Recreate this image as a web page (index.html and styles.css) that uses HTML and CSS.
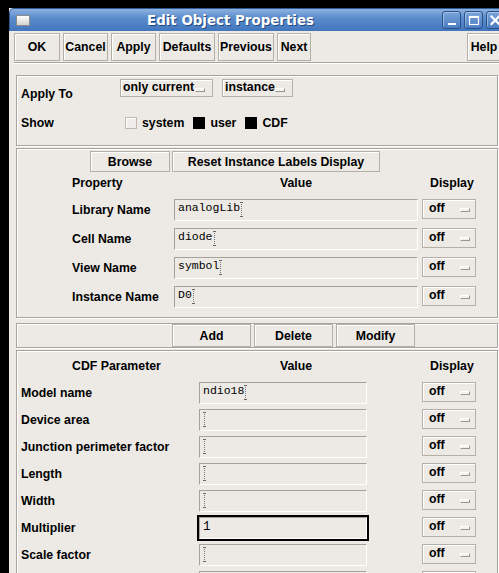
FILE: index.html
```html
<!DOCTYPE html>
<html>
<head>
<meta charset="utf-8">
<title>Edit Object Properties</title>
<link rel="stylesheet" href="styles.css">
</head>
<body>
<div class="window">
  <div class="titlebar">
    <span class="appicon"></span>
    <span class="title">Edit Object Properties</span>
    <span class="wbtn"><svg width="17" height="15" viewBox="0 0 17 15"><rect x="5" y="10" width="8" height="2" fill="#fff"/></svg></span>
    <span class="wbtn"><svg width="17" height="15" viewBox="0 0 17 15"><rect x="4.5" y="3.5" width="9" height="8" fill="none" stroke="#fff" stroke-width="1.2"/><rect x="4" y="3" width="10" height="2" fill="#fff"/></svg></span>
    <span class="wbtn"><svg width="17" height="15" viewBox="0 0 17 15"><path d="M4.5 3.5 L12 11 M12 3.5 L4.5 11" stroke="#fff" stroke-width="2.2" stroke-linecap="square"/></svg></span>
  </div>

  <div class="toolbar">
    <button class="btn tb w-ok">OK</button>
    <button class="btn tb w-cancel">Cancel</button>
    <button class="btn tb w-apply">Apply</button>
    <button class="btn tb w-def">Defaults</button>
    <button class="btn tb w-prev">Previous</button>
    <button class="btn tb w-next">Next</button>
    <button class="btn tb w-help">Help</button>
  </div>
  <div class="sep"></div>

  <div class="content">
    <section class="frame f-apply">
      <div class="arow">
        <span class="alabel">Apply To</span>
        <span class="combo c-cur">only current<i class="ind"></i></span>
        <span class="combo c-inst">instance<i class="ind"></i></span>
      </div>
      <div class="srow">
        <span class="slabel">Show</span>
        <span class="chk"></span><span class="ctext">system</span>
        <span class="chk on"></span><span class="ctext">user</span>
        <span class="chk on"></span><span class="ctext">CDF</span>
      </div>
    </section>

    <section class="frame f-prop">
      <div class="brow">
        <button class="btn b-browse">Browse</button>
        <button class="btn b-reset">Reset Instance Labels Display</button>
      </div>
      <div class="hdr">
        <span class="h1">Property</span>
        <span class="h2">Value</span>
        <span class="h3">Display</span>
      </div>
      <div class="pgrid">
        <span class="plabel">Library Name</span>
        <span class="field">analogLib<i class="cur"></i></span>
        <span class="off">off<i class="ind"></i></span>

        <span class="plabel">Cell Name</span>
        <span class="field">diode<i class="cur"></i></span>
        <span class="off">off<i class="ind"></i></span>

        <span class="plabel">View Name</span>
        <span class="field">symbol<i class="cur"></i></span>
        <span class="off">off<i class="ind"></i></span>

        <span class="plabel">Instance Name</span>
        <span class="field">D0<i class="cur"></i></span>
        <span class="off">off<i class="ind"></i></span>
      </div>
    </section>

    <section class="frame f-act">
      <button class="btn b-act">Add</button>
      <button class="btn b-act">Delete</button>
      <button class="btn b-act">Modify</button>
    </section>

    <section class="frame f-cdf">
      <div class="hdr">
        <span class="h1">CDF Parameter</span>
        <span class="h2">Value</span>
        <span class="h3">Display</span>
      </div>
      <div class="cgrid">
        <span class="clabel">Model name</span>
        <span class="field">ndio18<i class="cur"></i></span>
        <span class="off">off<i class="ind"></i></span>

        <span class="clabel">Device area</span>
        <span class="field"><i class="cur"></i></span>
        <span class="off">off<i class="ind"></i></span>

        <span class="clabel">Junction perimeter factor</span>
        <span class="field"><i class="cur"></i></span>
        <span class="off">off<i class="ind"></i></span>

        <span class="clabel">Length</span>
        <span class="field"><i class="cur"></i></span>
        <span class="off">off<i class="ind"></i></span>

        <span class="clabel">Width</span>
        <span class="field"><i class="cur"></i></span>
        <span class="off">off<i class="ind"></i></span>

        <span class="clabel">Multiplier</span>
        <span class="field focus">1</span>
        <span class="off">off<i class="ind"></i></span>

        <span class="clabel">Scale factor</span>
        <span class="field"><i class="cur"></i></span>
        <span class="off">off<i class="ind"></i></span>

        <span class="clabel"></span>
        <span class="field"></span>
        <span class="off"></span>
      </div>
    </section>
  </div>
</div>
</body>
</html>
```

FILE: styles.css
```css
* { box-sizing: border-box; }
html, body {
  margin: 0;
  width: 499px;
  height: 573px;
  overflow: hidden;
  background: #000;
}
body {
  font-family: "Liberation Sans", Arial, sans-serif;
  font-weight: bold;
  font-size: 12.3px;
  color: #000;
}
.window {
  margin: 8px 0 0 9px;
  width: 497px;
  height: 600px;
  background: #edeae5;
}

/* title bar */
.titlebar {
  height: 23px;
  display: flex;
  align-items: center;
  padding: 0 0 0 6px;
  background: linear-gradient(#8db2e0 0, #5b8ccc 40%, #4276bd 100%);
  border: 1px solid #2f5a96;
  border-bottom: none;
  border-radius: 5px 5px 0 0;
}
.appicon {
  width: 14px;
  height: 11px;
  background: linear-gradient(#ffffff, #d4d2cf);
  border: 1px solid #8b8b8b;
}
.title {
  flex: 1;
  text-align: center;
  color: #fff;
  font-family: "DejaVu Sans", sans-serif;
  font-size: 13.4px;
  font-weight: bold;
  text-shadow: 1px 1px 0 #24487c;
  padding-right: 8px;
}
.wbtn {
  width: 19px;
  height: 18px;
  margin-left: 3px;
  display: flex;
  align-items: center;
  justify-content: center;
  border: 1px solid #2a5089;
  border-radius: 3px;
  background: linear-gradient(#7aa4da, #4a7dc1);
  box-shadow: inset 1px 1px 0 rgba(255,255,255,0.35);
}

/* buttons */
.btn {
  font: inherit;
  color: #000;
  padding: 0;
  background: #edeae5;
  border: 1px solid #b4b0a8;
  box-shadow: inset 1px 1px 0 #fff;
  border-radius: 0;
}
.toolbar {
  height: 31px;
  display: flex;
  gap: 3px;
  padding: 2px 5px 0 5px;
}
.tb { height: 28px; }
.w-ok { width: 46px; }
.w-cancel { width: 45px; }
.w-apply { width: 45px; }
.w-def { width: 56px; }
.w-prev { width: 56px; }
.w-next { width: 34px; }
.w-help { width: 34px; margin-left: auto; }
.sep {
  margin-left: 5px;
  height: 2px;
  border-top: 1px solid #a9a59e;
  border-bottom: 1px solid #fff;
}

/* frames */
.content {
  padding: 11px 0 0 7px;
}
.frame {
  width: 482px;
  border: 1px solid #a9a59e;
  box-shadow: inset 1px 1px 0 #fff, 1px 1px 0 #fff;
}
.f-apply { height: 71px; padding: 3px 0 0 4px; }
.f-prop { height: 170px; margin-top: 2px; padding: 2px 0 0 55px; }
.f-act {
  height: 25px;
  margin-top: 5px;
  padding-left: 155px;
  display: flex;
  gap: 3px;
}
.f-cdf { height: 240px; margin-top: 2px; padding: 8px 0 0 4px; }

/* apply-to */
.arow { display: flex; align-items: flex-start; height: 18px; }
.alabel { width: 99px; margin-top: 8px; line-height: 14px; }
.combo {
  position: relative;
  height: 18px;
  line-height: 14px;
  padding-left: 2px;
  border: 1px solid #b4b0a8;
  box-shadow: inset 1px 1px 0 #fff;
}
.c-cur { width: 93px; }
.c-inst { width: 71px; margin-left: 9px; }
.combo .ind { position: absolute; right: 7px; top: 8px; }
.ind {
  display: inline-block;
  width: 10px;
  height: 4px;
  background: #f4f2ef;
  border: 1px solid #fff;
  border-right-color: #9a968f;
  border-bottom-color: #9a968f;
}
.srow {
  display: flex;
  align-items: center;
  margin-top: 19px;
  height: 14px;
}
.slabel { width: 104px; }
.chk {
  width: 12px;
  height: 12px;
  background: #efede9;
  border: 1px solid #bdb9b2;
  box-shadow: inset 1px 1px 0 #fff;
}
.chk.on { background: #000; border-color: #000; box-shadow: none; }
.ctext { margin: 0 9px 0 5px; }

/* property area */
.brow { display: flex; gap: 2px; padding-left: 18px; height: 21px; }
.brow .btn { height: 21px; }
.b-browse { width: 80px; }
.b-reset { width: 208px; }
.hdr {
  display: grid;
  grid-template-columns: 102px 244px 58px;
  line-height: 14px;
  margin-top: 4px;
}
.f-cdf .hdr { padding-left: 51px; margin-top: 0; }
.h2 { text-align: center; }
.h3 { padding-left: 12px; }
.pgrid {
  display: grid;
  grid-template-columns: 102px 244px 58px;
  grid-auto-rows: 22px;
  row-gap: 7px;
  margin-top: 9px;
  align-items: center;
}
.cgrid {
  display: grid;
  grid-template-columns: 178px 168px 109px;
  grid-auto-rows: 22px;
  row-gap: 5px;
  margin-top: 9px;
  align-items: center;
}
.pgrid .off, .cgrid .off { justify-self: end; }
.field {
  height: 22px;
  padding: 1px 0 0 3px;
  font-family: "Liberation Mono", "DejaVu Sans Mono", monospace;
  font-weight: normal;
  font-size: 11.5px;
  line-height: 14px;
  border: 1px solid #a6a29a;
  border-right-color: #fff;
  border-bottom-color: #fff;
  white-space: nowrap;
}
.field.focus {
  outline: 2px solid #000;
  outline-offset: 0;
  padding-top: 2px;
  padding-left: 3px;
  font-size: 12.5px;
}
.cur {
  display: inline-block;
  width: 3px;
  height: 15px;
  vertical-align: top;
  margin: 1px 0 0 0;
  background:
    linear-gradient(#666, #666) 0 0 / 3px 1px no-repeat,
    linear-gradient(#666, #666) 0 14px / 3px 1px no-repeat,
    repeating-linear-gradient(#777 0 1px, transparent 1px 2px) 1px 0 / 1px 15px no-repeat;
}
.off {
  position: relative;
  width: 54px;
  height: 20px;
  align-self: start;
  line-height: 17px;
  padding-left: 6px;
  border: 1px solid #b4b0a8;
  box-shadow: inset 1px 1px 0 #fff;
}
.off .ind { position: absolute; left: 37px; top: 8px; }
.b-act { width: 79px; height: 23px; }
```
